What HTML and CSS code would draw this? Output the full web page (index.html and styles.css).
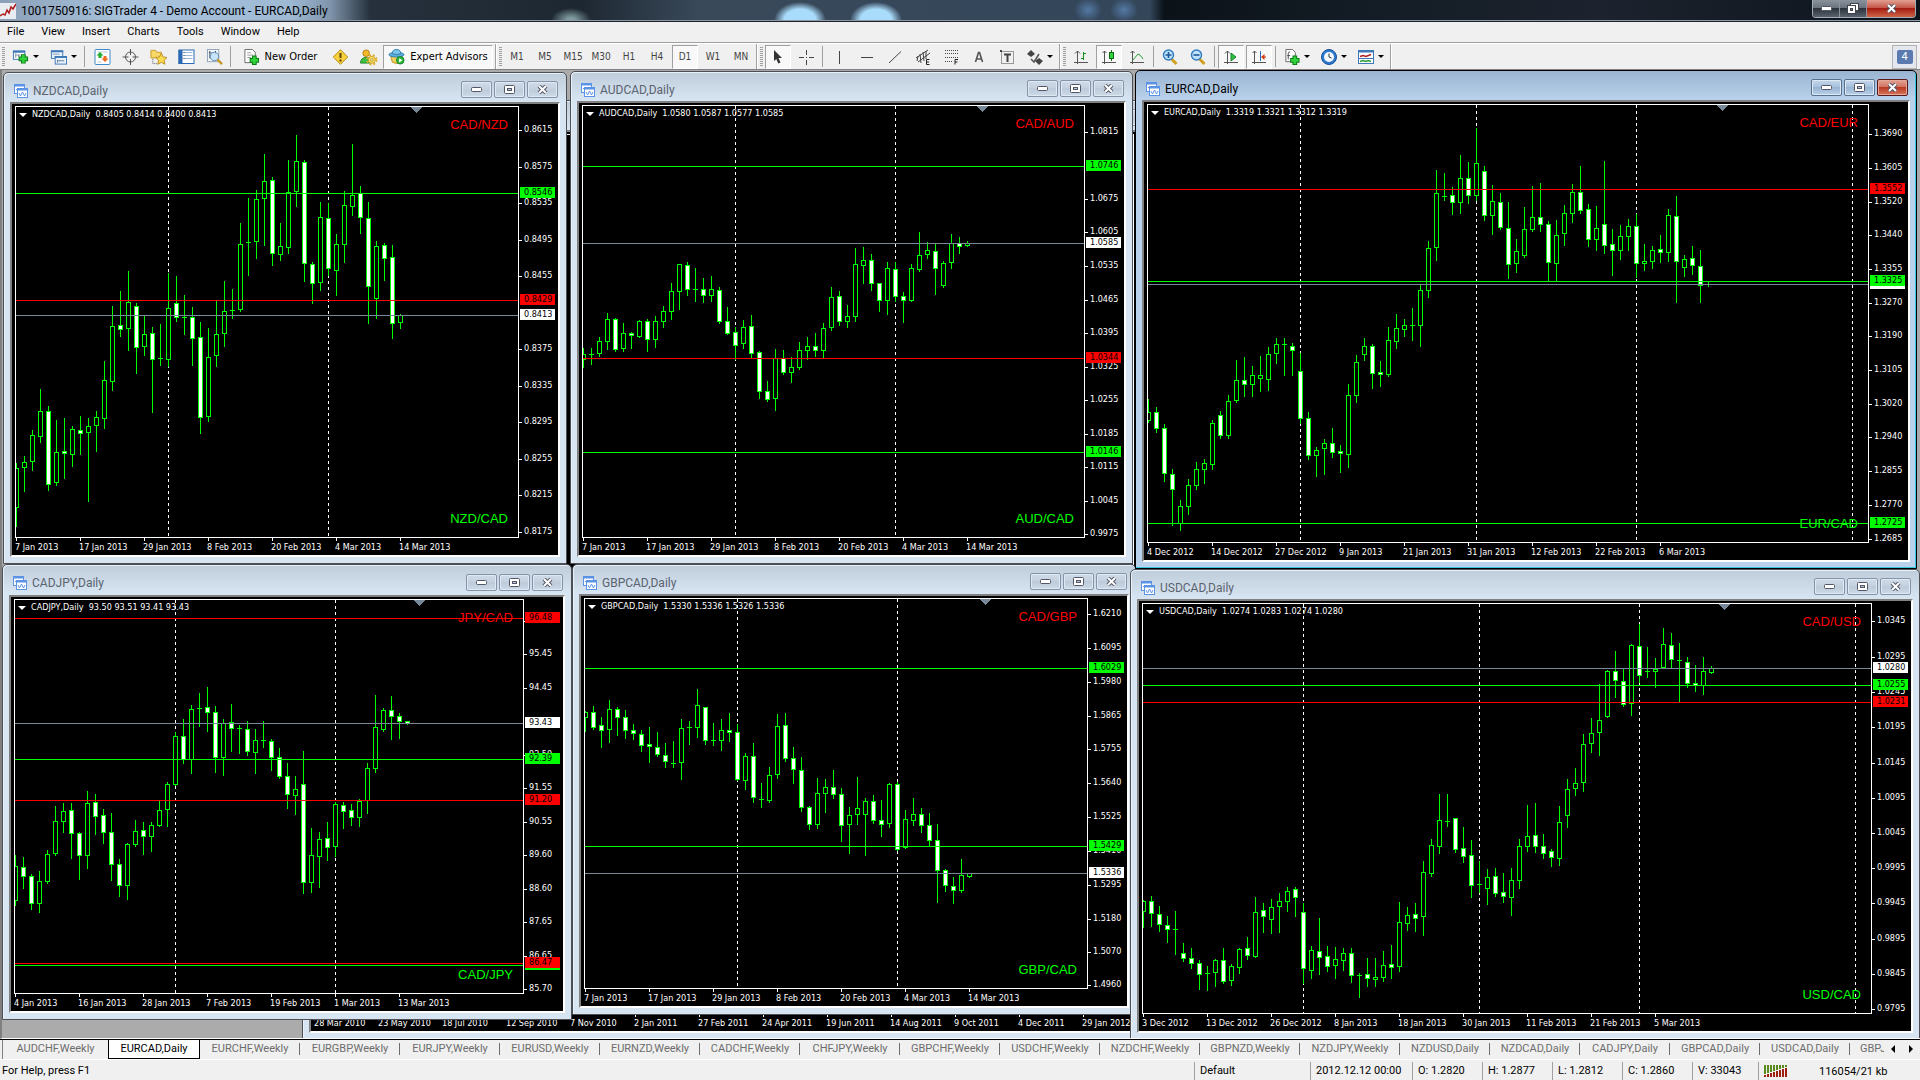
FILE: index.html
```html
<!DOCTYPE html>
<html lang="en">
<head>
<meta charset="utf-8">
<title>1001750916: SIGTrader 4 - Demo Account - EURCAD,Daily</title>
<link rel="stylesheet" href="styles.css">
</head>
<body>
<svg class="symbols" aria-hidden="true">
  <symbol id="i-chart-window" viewBox="0 0 14 14">
    <rect x=".5" y=".5" width="10" height="9" fill="#fff" stroke="#5b93e6"/><path d="M0 1.5h11" stroke="#5b93e6" stroke-width="2"/>
    <path d="M2 6l2-2 1 2 2-2" fill="none" stroke="#5b93e6"/>
    <rect x="3.500" y="4.500" width="10" height="9" fill="#fff" stroke="#5b93e6"/><path d="M3 5.500h11" stroke="#5b93e6" stroke-width="2"/>
    <path d="M5 9l1.500 3 2-4 2 4 1.500-3" fill="none" stroke="#5b93e6"/>
  </symbol>
  <symbol id="i-min" viewBox="0 0 11 5"><rect x=".5" y=".5" width="10" height="4" rx="1" fill="#fff" stroke="#535666"/></symbol>
  <symbol id="i-max" viewBox="0 0 11 9"><rect x=".5" y=".5" width="10" height="8" rx="1" fill="#fff" stroke="#535666"/><rect x="3.500" y="3.500" width="4" height="2" fill="#b8c8d8" stroke="#535666"/></symbol>
  <symbol id="i-restore" viewBox="0 0 12 11"><rect x="3.500" y=".5" width="8" height="7" fill="#fff" stroke="#40444e"/><rect x=".5" y="2.500" width="8" height="8" fill="#fff" stroke="#40444e"/><rect x="3.500" y="5.500" width="2" height="2" fill="#888" stroke="#40444e"/></symbol>
  <symbol id="i-close" viewBox="0 0 11 9"><path d="M2 1l7 7M9 1L2 8" stroke="#535666" stroke-width="4"/><path d="M2 1l7 7M9 1L2 8" stroke="#fff" stroke-width="2"/></symbol>
</svg>

<header class="titlebar">
  <svg class="app-icon" viewBox="0 0 16 16"><rect width="16" height="16" fill="#e9edf2"/><path d="M0 13l3-2 2 1 2-5 2 3 2-6 2 2 3-5" fill="none" stroke="#b01c1c" stroke-width="1.500"/></svg>
  <h1 class="title">1001750916: SIGTrader 4 - Demo Account - EURCAD,Daily</h1>
  <div class="app-buttons">
    <button class="app-btn" aria-label="Minimize"><svg width="11" height="5"><use href="#i-min"/></svg></button>
    <button class="app-btn" aria-label="Restore"><svg width="12" height="11"><use href="#i-restore"/></svg></button>
    <button class="app-btn app-close" aria-label="Close"><svg width="11" height="9"><use href="#i-close"/></svg></button>
  </div>
</header>

<nav class="menubar" aria-label="Main menu">
  <button>File</button><button>View</button><button>Insert</button><button>Charts</button><button>Tools</button><button>Window</button><button>Help</button>
</nav>

<div class="toolbars">
  <div class="toolbar standard" role="toolbar" aria-label="Standard">
    <button class="tool drop" aria-label="New chart"><svg viewBox="0 0 18 16"><rect x="1.500" y="1.500" width="12" height="9" fill="#fff" stroke="#3f78b8"/><path d="M1 2.500h13" stroke="#3f78b8" stroke-width="2"/><path d="M4 4v5M3 6h6M7 5v3" stroke="#89a" fill="none"/><path d="M12 5v10M7 10h10" stroke="#0a7a14" stroke-width="5"/><path d="M12 6v8M8 10h8" stroke="#2fd23c" stroke-width="3"/></svg><i class="caret"></i></button>
    <button class="tool drop" aria-label="Profiles"><svg viewBox="0 0 18 16"><rect x="1.500" y="1.500" width="12" height="8" fill="#e8f2fc" stroke="#3f78b8"/><path d="M1 2h13" stroke="#3f78b8" stroke-width="2"/><path d="M3 5h7" stroke="#89a"/><rect x="5.500" y="7.500" width="12" height="8" fill="#e8f2fc" stroke="#3f78b8"/><path d="M5 8h13" stroke="#3f78b8" stroke-width="2"/><path d="M8 12h7M8 11v3" stroke="#678"/></svg><i class="caret"></i></button>
    <span class="sep"></span>
    <button class="tool" aria-label="Market Watch"><svg viewBox="0 0 16 16"><rect x=".5" y=".5" width="15" height="15" rx="1" fill="#fff" stroke="#3f8ac8"/><path d="M3 3h10M3 13h4" stroke="#b8c8d8"/><path d="M2 6.500L5.500 3 9 6.500H7V9H4V6.500z" fill="#1fae2c"/><path d="M7 9.500h2V7h3v2.500h2L10.500 13z" fill="#ef6a1c"/></svg></button>
    <button class="tool" aria-label="Data Window"><svg viewBox="0 0 16 16"><circle cx="8" cy="8" r="5" fill="none" stroke="#555"/><path d="M8 0v6M8 10v6M0 8h6M10 8h6" stroke="#555"/></svg></button>
    <button class="tool" aria-label="Navigator"><svg viewBox="0 0 18 16"><path d="M1 1h5l1 2h5v6H1z" fill="#f8d868" stroke="#c69a28"/><path d="M3 10v5h4" stroke="#555" stroke-dasharray="1 1" fill="none"/><path d="M12 4l2 4 4 .5-3 3 .8 4.200L12 13.600 8.200 15.700 9 11.500l-3-3 4-.5z" fill="#fbdc50" stroke="#b98a20"/></svg></button>
    <button class="tool" aria-label="Terminal"><svg viewBox="0 0 16 16"><rect x=".5" y="1" width="15" height="13.500" fill="#fff" stroke="#2a6ab4"/><rect x="0" y="1" width="4" height="14" fill="#2a6ab4"/><path d="M6 3.500h8M6 6.500h8M6 9.500h8" stroke="#9bb8dc"/><path d="M5.500 3v8" stroke="#222" stroke-dasharray="1 2"/></svg></button>
    <button class="tool" aria-label="Strategy Tester"><svg viewBox="0 0 18 17"><rect x="1.500" y=".5" width="12" height="13" fill="#f4f7fa" stroke="#8fa3b8"/><path d="M4 2v8M3 4h3M10 2v4" stroke="#456"/><circle cx="9" cy="8" r="4.500" fill="#bfe0f8" fill-opacity=".85" stroke="#5a86b0"/><path d="M12 11l5 5" stroke="#c79828" stroke-width="2.500"/></svg></button>
    <span class="sep"></span>
    <button class="tool wide"><svg viewBox="0 0 17 17"><path d="M1.500.5h8l3 3v11h-11z" fill="#fff" stroke="#666"/><path d="M4 4h4M4 6.500h6M4 9h4" stroke="#999"/><path d="M11.500 7v10M6.500 12h10" stroke="#0a7a14" stroke-width="5"/><path d="M11.500 8v8M7.500 12h8" stroke="#2fd23c" stroke-width="3"/></svg>New Order</button>
    <button class="tool" aria-label="Alerts"><svg viewBox="0 0 16 16"><path d="M8 .7L15.300 8 8 15.300.7 8z" fill="#f8cf3c" stroke="#b8901c"/><path d="M8 4v5M8 10.500v2" stroke="#5a4408" stroke-width="2"/></svg></button>
    <button class="tool" aria-label="Options"><svg viewBox="0 0 18 17"><circle cx="6.500" cy="4.500" r="3.500" fill="#f4b928" stroke="#b47c14"/><path d="M.5 15c0-4 2-6 6-6s5 2 5 6z" fill="#3fbf48" stroke="#23882c"/><circle cx="12.500" cy="11.500" r="5" fill="none" stroke="#d9ae28" stroke-width="2" stroke-dasharray="2 2"/><circle cx="12.500" cy="11.500" r="3.700" fill="#f9de5c" stroke="#c9a12c"/><circle cx="12.500" cy="11.500" r="1.300" fill="#fff" stroke="#b9921c"/></svg></button>
    <button class="tool ea pressed" aria-pressed="true"><svg viewBox="0 0 17 17"><path d="M2 6h13l-2 8q-4.500 3-9 0z" fill="#f3cf5a" stroke="#b8902c"/><ellipse cx="8.500" cy="6" rx="8" ry="2.500" fill="#5fb0dc" stroke="#2c7cb0"/><path d="M4 5q0-4.500 4.500-4.500T13 5q-4.500 2-9 0z" fill="#7cc4ea" stroke="#2c7cb0"/><circle cx="12.500" cy="12" r="4" fill="#2db83c" stroke="#14802a"/><path d="M11.200 9.700v4.600l3.600-2.300z" fill="#fff"/></svg>Expert Advisors</button>
  </div>
  <div class="toolbar periods" role="toolbar" aria-label="Periodicity">
    <button class="tool">M1</button><button class="tool">M5</button><button class="tool">M15</button><button class="tool">M30</button><button class="tool">H1</button><button class="tool">H4</button><button class="tool pressed" aria-pressed="true">D1</button><button class="tool">W1</button><button class="tool">MN</button>
  </div>
  <div class="toolbar" role="toolbar" aria-label="Line Studies">
    <button class="tool pressed" aria-label="Cursor"><svg viewBox="0 0 16 16"><path d="M4 1l8 8H8.500l2 4.500-2.200 1L6.300 10 4 12z" fill="#333"/></svg></button>
    <button class="tool" aria-label="Crosshair"><svg viewBox="0 0 16 16"><path d="M8.500 1v5M8.500 11v5M1 8.500h5M11 8.500h5M8 8.500h1" stroke="#444" fill="none"/></svg></button>
    <span class="sep"></span>
    <button class="tool" aria-label="Vertical line"><svg viewBox="0 0 16 16"><path d="M8.500 2v13" stroke="#444"/></svg></button>
    <button class="tool" aria-label="Horizontal line"><svg viewBox="0 0 16 16"><path d="M2 8.500h12" stroke="#444"/></svg></button>
    <button class="tool" aria-label="Trendline"><svg viewBox="0 0 16 16"><path d="M2 14L14 2.500" stroke="#444"/></svg></button>
    <button class="tool" aria-label="Equidistant channel"><svg viewBox="0 0 16 16"><path d="M1 9L13 1M3 13L15 4M5 5l1 9M8 3l1 9M11 2v8M3 7l-1 5" stroke="#444"/><path d="M14.500 10.500h-3v5h3M11.500 13h2.500" stroke="#222" fill="none"/></svg></button>
    <button class="tool" aria-label="Fibonacci retracement"><svg viewBox="0 0 16 16"><path d="M2 1.500h13M2 4.500h13M2 8.500h13M2 12.500h8" stroke="#444" stroke-dasharray="1 1"/><path d="M15 10.500h-3v5M12 13h2.500" stroke="#222" fill="none"/></svg></button>
    <button class="tool" aria-label="Text"><svg viewBox="0 0 16 16"><path d="M4.500 13L7.500 3.500h1l3 9.500M5.500 10h5" stroke="#555" stroke-width="1.600" fill="none"/></svg></button>
    <button class="tool" aria-label="Text label"><svg viewBox="0 0 16 16"><rect x="2.500" y="2.500" width="12" height="12" fill="none" stroke="#444" stroke-dasharray="1 1"/><path d="M5 5.500h7M8.500 5v8" stroke="#444" stroke-width="2"/><rect x="1" y="1" width="2" height="2" fill="#444"/></svg></button>
    <button class="tool drop" aria-label="Arrows"><svg viewBox="0 0 16 16"><path d="M0 5l4-4 4 4-4 3z" fill="#444"/><path d="M8 12l4-3 4 3-4 4z" fill="#444"/><path d="M4 10l3 3 5-8" fill="none" stroke="#555" stroke-width="1.500"/></svg><i class="caret"></i></button>
  </div>
  <div class="toolbar" role="toolbar" aria-label="Charts">
    <button class="tool" aria-label="Bar chart"><svg viewBox="0 0 16 16"><path d="M4.500 2v13M1 13.500h14M2 4.500L4.500 2 7 4.500" stroke="#555" fill="none"/><path d="M10.500 3v8M8 9.500h2.500M10.500 4.500H13" stroke="#138a1c" fill="none"/></svg></button>
    <button class="tool pressed" aria-label="Candlesticks" aria-pressed="true"><svg viewBox="0 0 16 16"><path d="M3.500 2v13M1 13.500h14M1.500 4L3.500 2l2 2" stroke="#555" fill="none"/><path d="M10.500 1v11" stroke="#0c6a14"/><rect x="8.500" y="3.500" width="4" height="6" fill="#2fd23c" stroke="#0c6a14"/></svg></button>
    <button class="tool" aria-label="Line chart"><svg viewBox="0 0 16 16"><path d="M3.500 2v13M1 13.500h14M1.500 4L3.500 2l2 2" stroke="#555" fill="none"/><path d="M4 11l5-6q2 0 5 5" stroke="#2aa036" fill="none"/></svg></button>
    <span class="sep"></span>
    <button class="tool" aria-label="Zoom in"><svg viewBox="0 0 16 16"><path d="M9.500 10l5 5" stroke="#d0a020" stroke-width="3"/><circle cx="6.500" cy="6" r="5" fill="#bfe2fa" stroke="#2f7ac0" stroke-width="1.400"/><path d="M6.500 3v6M3.500 6h6" stroke="#1f5a98" stroke-width="1.600"/></svg></button>
    <button class="tool" aria-label="Zoom out"><svg viewBox="0 0 16 16"><path d="M9.500 10l5 5" stroke="#d0a020" stroke-width="3"/><circle cx="6.500" cy="6" r="5" fill="#bfe2fa" stroke="#2f7ac0" stroke-width="1.400"/><path d="M3.500 6h6" stroke="#1f5a98" stroke-width="1.600"/></svg></button>
    <span class="sep"></span>
    <button class="tool pressed" aria-label="Auto scroll" aria-pressed="true"><svg viewBox="0 0 16 16"><path d="M4.500 2v13M1 13.500h14M2 4.500L4.500 2 7 4.500" stroke="#555" fill="none"/><path d="M8 4l5 4-5 4z" fill="#2fc23c" stroke="#14802a"/></svg></button>
    <button class="tool pressed" aria-label="Chart shift" aria-pressed="true"><svg viewBox="0 0 16 16"><path d="M3.500 2v13M1 13.500h14M1.500 4L3.500 2l2 2" stroke="#555" fill="none"/><path d="M9.500 2v10" stroke="#2a6ab4"/><path d="M15 8h-4" stroke="#c22c10"/><path d="M10 8l3.500-3v6z" fill="#d83c14"/></svg></button>
    <span class="sep"></span>
    <button class="tool drop" aria-label="Indicators"><svg viewBox="0 0 16 17"><path d="M1.500.5h7l3 3v10h-10z" fill="#fff" stroke="#666"/><path d="M4 11V5q0-2 2-2M3 7h3" stroke="#444" fill="none"/><path d="M11 7v10M6 12h10" stroke="#0a7a14" stroke-width="5"/><path d="M11 8v8M7 12h8" stroke="#2fd23c" stroke-width="3"/></svg><i class="caret"></i></button>
    <button class="tool drop" aria-label="Periods"><svg viewBox="0 0 16 16"><circle cx="8" cy="8" r="7.500" fill="#2a7ad0" stroke="#1a4f98"/><circle cx="8" cy="8" r="5" fill="#f4f9ff"/><path d="M8 4.500V8l2.500 1" stroke="#333" fill="none"/></svg><i class="caret"></i></button>
    <button class="tool drop" aria-label="Templates"><svg viewBox="0 0 16 16"><rect x=".5" y="1.500" width="15" height="13" fill="#fff" stroke="#3f78b8"/><path d="M0 2.500h16" stroke="#3f78b8" stroke-width="2"/><path d="M2 7.500l3-1 3 1 5-2" stroke="#b02020" fill="none" stroke-width="1.400"/><path d="M1 9.500h14" stroke="#3f78b8"/><path d="M2 12.500l3-1 3 1 2-1 3 1" stroke="#2a9a36" fill="none" stroke-width="1.400"/></svg><i class="caret"></i></button>
  </div>
  <button class="messages" aria-label="4 messages"><span>4</span></button>
</div>

<main class="desktop" id="desktop"></main>

<nav class="tabs" aria-label="Open charts">
  <div class="tab-list">
    <button class="first">AUDCHF,Weekly</button><button class="daily active" aria-current="true">EURCAD,Daily</button><button>EURCHF,Weekly</button><button>EURGBP,Weekly</button><button>EURJPY,Weekly</button><button>EURUSD,Weekly</button><button>EURNZD,Weekly</button><button>CADCHF,Weekly</button><button>CHFJPY,Weekly</button><button>GBPCHF,Weekly</button><button>USDCHF,Weekly</button><button>NZDCHF,Weekly</button><button>GBPNZD,Weekly</button><button>NZDJPY,Weekly</button><button class="daily">NZDUSD,Daily</button><button class="daily">NZDCAD,Daily</button><button class="daily">CADJPY,Daily</button><button class="daily">GBPCAD,Daily</button><button class="daily">USDCAD,Daily</button><button class="cut">GBPJPY,Daily</button>
  </div>
  <button class="scroll left" aria-label="Scroll left"></button>
  <button class="scroll right" aria-label="Scroll right"></button>
</nav>

<footer class="status">
  <span>For Help, press F1</span>
  <span>Default</span>
  <span>2012.12.12 00:00</span>
  <span>O: 1.2820</span>
  <span>H: 1.2877</span>
  <span>L: 1.2812</span>
  <span>C: 1.2860</span>
  <span>V: 33043</span>
  <span class="traffic"><svg width="23" height="12" viewBox="0 0 23 12" shape-rendering="crispEdges"><g fill="#5a8a1c"><path d="M0 0h2v9H0zM3 0h2v8H3zM6 0h2v7H6zM9 0h2v6H9zM12 0h2v5h-2zM15 0h2v4h-2zM18 0h2v3h-2zM21 0h2v2h-2z"/></g><g fill="#a02010"><path d="M0 10h2v2H0zM3 9h2v3H3zM6 8h2v4H6zM9 7h2v5H9zM12 6h2v6h-2zM15 5h2v7h-2zM18 4h2v8h-2zM21 3h2v9h-2z"/></g></svg>116054/21 kb</span>
</footer>
<script src="charts.js"></script>
</body>
</html>
```
FILE: styles.css
```css
* { box-sizing: border-box; }

body {
  margin: 0;
  height: 100vh;
  display: flex;
  flex-direction: column;
  overflow: hidden;
  background: #f0f0f0;
  color: #000;
  font: 11px/14px Roboto, "Liberation Sans", sans-serif;
}

button {
  margin: 0;
  padding: 0;
  border: 0;
  background: none;
  color: inherit;
  font: inherit;
}

.symbols { display: none; }

/* Application title bar */
.titlebar {
  flex: none;
  display: flex;
  align-items: center;
  height: 22px;
  padding-right: 4px;
  border-bottom: 1px solid #1c222c;
  box-shadow: inset 0 -1px #8e98a6;
  background:
    radial-gradient(ellipse 26px 18px at 800px 20px, #a9dcfb 60%, transparent),
    radial-gradient(ellipse 26px 18px at 876px 20px, #a9dcfb 60%, transparent),
    radial-gradient(ellipse 20px 12px at 571px 20px, #7d9a9c 20%, transparent),
    radial-gradient(ellipse 14px 12px at 1088px 10px, #5479a4, transparent),
    radial-gradient(ellipse 14px 12px at 1124px 10px, #5479a4, transparent),
    linear-gradient(90deg, #8ba0b8, #a9c4de 130px, #9db9d4 290px, #7f95ab 330px, #26313d 370px, #1d2731 580px, #39495a 700px, #33465a 1150px, #0b1218 1164px, #131b24 1350px, #1c232e 1600px, #0d131b);
}
.app-icon { width: 16px; height: 16px; }
.title { flex: 1; margin: 0 0 0 5px; font-size: 12px; font-weight: 400; line-height: 16px; }
.app-buttons {
  align-self: flex-start;
  display: flex;
  height: 18px;
  border: 1px solid #a4acb6;
  border-top: 0;
  border-radius: 0 0 4px 4px;
  overflow: hidden;
}
.app-btn {
  display: flex;
  align-items: center;
  justify-content: center;
  width: 27px;
  border-right: 1px solid #8a929c;
  background: linear-gradient(#8a929c, #6b737e 45%, #2c333d 50%, #59626d);
}
.app-close { width: 48px; border-right: 0; background: linear-gradient(#e0a090, #c5574a 45%, #a51d10 50%, #cf6448); }

/* Menu */
.menubar {
  flex: none;
  display: flex;
  height: 21px;
  padding-left: 7px;
  gap: 17px;
  border-bottom: 1px solid #a0a0a0;
}

/* Toolbars */
.toolbars {
  flex: none;
  display: flex;
  align-items: stretch;
  height: 27px;
  border-top: 1px solid #fff;
  border-bottom: 1px solid #808080;
}
.toolbar {
  display: flex;
  align-items: center;
  gap: 2px;
  padding: 0 2px;
  border-right: 1px solid #a0a0a0;
  box-shadow: 1px 0 #fff;
}
.toolbar + .toolbar { padding-left: 3px; }
.toolbar::before {
  content: "";
  width: 3px;
  height: 20px;
  background: repeating-linear-gradient(#a0a0a0 0 1px, #f0f0f0 1px 2px);
}
.sep { width: 1px; height: 21px; margin: 0 1px; background: #a0a0a0; }
.standard .sep { margin: 0 2px 0 1px; }
.tool {
  display: flex;
  align-items: center;
  justify-content: center;
  gap: 5px;
  width: 26px;
  height: 24px;
}
.tool svg { flex: none; width: 16px; height: 16px; overflow: visible; }
.drop { width: 35px; gap: 4px; }
.standard .drop { width: 36px; }
.standard svg { width: 17px; }
.caret { width: 6px; border: 3px solid transparent; border-top-color: #000; border-bottom: 0; }
.wide { width: 90px; }
.ea { width: 110px; }
.wide, .ea { font: 11px/16px "DejaVu Sans Condensed", "DejaVu Sans", sans-serif; white-space: nowrap; }
.pressed {
  border: 1px solid;
  border-color: #a0a0a0 #fff #fff #a0a0a0;
  background: #f8f8f8;
}
.periods { font-family: "DejaVu Sans Condensed", "DejaVu Sans", sans-serif; font-size: 10px; color: #444; }
.messages {
  align-self: center;
  width: 25px;
  height: 24px;
  margin: 0 3px 0 auto;
  border: 1px solid #b4b4b4;
  background: #e4e8ee;
}
.messages span {
  display: block;
  width: 16px;
  height: 14px;
  margin: 0 auto;
  border-radius: 2px;
  background: #5b7bb0;
  color: #fff;
  font-size: 11px;
}

/* Desktop holding the chart windows */
.desktop {
  position: relative;
  flex: 1;
  min-height: 0;
  overflow: hidden;
  border-left: 2px solid #808080;
  border-bottom: 1px solid #fff;
  background: #ababab;
}
.window {
  position: absolute;
  display: flex;
  flex-direction: column;
  padding: 0 6px 6px;
  border: 1px solid #4c4f55;
  border-radius: 5px 5px 0 0;
  background: linear-gradient(#bfcddb, #d7e4f2 28px);
  box-shadow: inset 1px 1px #e8f0f8;
}
.window.active {
  background: linear-gradient(#99b4d2, #b9d1ea 28px);
  border-color: #000;
  box-shadow: inset -1px -1px #35c8dc;
}
.w-back   { left: 300px; top: 30px; width: 880px; height: 940px; }
.w-nzdcad { left: 1px; top: 2px; width: 564px; height: 492px; }
.w-audcad { left: 568px; top: 1px; width: 563px; height: 493px; }
.w-eurcad { left: 1133px; top: 0; width: 782px; height: 499px; z-index: 1; }
.w-cadjpy { left: 0; top: 494px; width: 570px; height: 456px; }
.w-gbpcad { left: 570px; top: 494px; width: 564px; height: 451px; }
.w-usdcad { left: 1128px; top: 499px; width: 790px; height: 471px; }
.w-cadjpy .caption { height: 30px; }

.caption {
  flex: none;
  display: flex;
  align-items: center;
  gap: 5px;
  height: 29px;
  padding: 6px 2px 0 4px;
  color: #5a636e;
}
.active .caption { color: #000; }
.caption h2 { flex: 1; margin: 0; font-size: 12px; font-weight: 400; line-height: 16px; }
.caption-buttons { display: flex; gap: 2px; margin-top: -2px; }
.caption-buttons button {
  display: flex;
  align-items: center;
  justify-content: center;
  width: 31px;
  height: 17px;
  border: 1px solid #8592a8;
  border-radius: 2px;
  background: linear-gradient(#cfdbe8, #c4d0de 50%, #bccad9 50%, #cddae8);
  box-shadow: inset 0 0 0 1px #dfe9f3;
}
.active .caption-buttons button { border-color: #56708f; background: linear-gradient(#c5d8ec, #a4bfdb 50%, #98b4d2 50%, #b9d1ea); }
.active .caption-buttons button:last-child { border-color: #5a1a1a; background: linear-gradient(#e2a294, #d0705e 50%, #bb3a22 50%, #d5765c); box-shadow: inset 0 0 0 1px #e4a898; }

.chart {
  flex: 1;
  min-height: 0;
  display: grid;
  grid-template: minmax(0, 1fr) 17px / minmax(0, 1fr) 39px;
  padding: 2px 0 0 3px;
  border: 2px solid;
  border-color: #808080 #fff #fff #808080;
  background: #000;
  color: #fff;
  font: 9px/11px "DejaVu Sans Condensed", "DejaVu Sans", sans-serif;
}
.plot { position: relative; border: 1px solid #fff; overflow: hidden; }
.plot svg { position: absolute; inset: 0; width: 100%; height: 100%; }
.quote { position: relative; display: flex; align-items: center; gap: 5px; padding: 2px 0 0 3px; white-space: pre; }
.quote::before { content: ""; border: 4px solid transparent; border-top-color: #fff; border-bottom: 0; }
.pair {
  position: absolute;
  right: 10px;
  margin-top: -9px;
  font: 13px/16px "Liberation Sans", Arial, sans-serif;
}
.pair.sell { color: #f00; }
.pair.buy { color: #0f0; }
.prices { position: relative; }
.prices span { position: absolute; left: 1px; width: 35px; height: 11px; margin-top: -6px; padding-left: 4px; white-space: nowrap; }
.prices .tick::before { content: ""; position: absolute; left: -1px; top: 6px; width: 3px; height: 1px; background: #fff; }
.prices .tag { color: #000; }
.green { background: #0f0; }
.red { background: #f00; }
.last { background: #fff; }
.times { grid-column: 1 / -1; display: grid; grid-auto-flow: column; grid-auto-columns: 64px; overflow: hidden; }
.times span { position: relative; padding-top: 4px; white-space: nowrap; }
.times span::before { content: ""; position: absolute; left: 1px; top: 0; width: 1px; height: 3px; background: #fff; }

/* Chart tabs */
.tabs {
  flex: none;
  display: flex;
  align-items: flex-start;
  height: 21px;
  border-top: 1px solid #000;
  border-bottom: 1px solid #fff;
  color: #6d6d6d;
}
.tab-list { flex: 1; min-width: 0; display: flex; overflow: hidden; margin-left: 2px; border-left: 1px solid #808080; }
.tab-list button { flex: none; width: 100px; height: 19px; padding: 0 0 1px; white-space: nowrap; position: relative; }
.tab-list button:not(.first, .active, .cut)::after { content: ""; position: absolute; right: 0; top: 3px; width: 1px; height: 12px; background: #6d6d6d; }
.tab-list .first { width: 105px; }
.tab-list .daily { width: 90px; }
.tab-list .active { width: 92px; background: #fff; color: #000; border: solid #000; border-width: 0 1px 1px; }
.tab-list .cut { width: 36px; padding-left: 10px; overflow: hidden; text-align: left; }
.scroll { width: 18px; height: 18px; display: flex; align-items: center; justify-content: center; }
.scroll::before { content: ""; border: 4px solid transparent; }
.scroll.left::before { border-right-color: #000; border-left: 0; }
.scroll.right::before { border-left-color: #000; border-right: 0; }

/* Status bar */
.status {
  flex: none;
  display: grid;
  grid-template-columns: 1fr 116px 102px 70px 70px 70px 70px 66px 162px;
  height: 20px;
  padding-top: 2px;
  line-height: 17px;
}
.status span { padding-left: 5px; border-left: 1px solid #a0a0a0; white-space: nowrap; }
.status span:first-child { padding-left: 2px; border: 0; }
.status .traffic { display: flex; align-items: center; gap: 32px; }
```
FILE: charts.js
```js
// Bar heights are kept in thirds of a pixel: [high, body top, body bottom, low, falling].
// A bar whose body top equals its bottom opened and closed at one price.
const UNIT = 3;
const STEP = 8;

const charts = [
  {
    id: 'back', title: '', quote: '', top: 0, marker: 0, breaks: [], bars: [], prices: [], lines: [], pairs: [],
    times: ['28 Mar 2010', '23 May 2010', '18 Jul 2010', '12 Sep 2010', '7 Nov 2010', '2 Jan 2011', '27 Feb 2011', '24 Apr 2011', '19 Jun 2011', '14 Aug 2011', '9 Oct 2011', '4 Dec 2011', '29 Jan 2012'],
  },
  {
    id: 'nzdcad', title: 'NZDCAD,Daily', quote: '0.8405 0.8414 0.8400 0.8413', top: 6, marker: 401, breaks: [19, 39],
    pairs: [['CAD/NZD', 76], ['NZD/CAD', 1258]],
    times: ['7 Jan 2013', '17 Jan 2013', '29 Jan 2013', '8 Feb 2013', '20 Feb 2013', '4 Mar 2013', '14 Mar 2013'],
    prices: [[90, '0.8615'], [201, '0.8575'], [310, '0.8535'], [420, '0.8495'], [528, '0.8455'], [747, '0.8375'], [858, '0.8335'], [966, '0.8295'], [1077, '0.8255'], [1185, '0.8215'], [1296, '0.8175']],
    lines: [[646, 'last', '0.8413'], [280, 'green', '0.8546'], [601, 'red', '0.8429']],
    bars: [[1090,1104,1222,1280,0],[1068,1087,1103,1175,0],[990,1006,1085,1112,0],[867,934,1010,1028,0],[918,934,1154,1172,1],[960,1057,1148,1155,0],[954,1054,1060,1134,1],[978,988,1063,1098,0],[948,991,1000,1064,1],[954,979,997,1205,0],[934,952,976,1055,0],[783,841,956,986,0],[618,679,845,872,0],[573,676,689,708,1],[513,606,686,752,0],[610,619,743,819,1],[646,703,740,767,0],[682,700,779,936,1],[672,776,776,797,0],[519,625,779,800,0],[528,610,653,665,1],[585,652,652,702,0],[621,652,716,797,1],[666,712,953,1001,1],[685,772,950,965,0],[603,703,767,800,0],[543,634,701,740,0],[567,631,631,654,0],[369,433,629,633,0],[294,428,428,525,0],[270,298,425,476,0],[162,244,296,435,0],[231,241,461,497,1],[369,439,464,482,0],[180,277,443,461,0],[105,184,275,320,0],[180,187,491,545,1],[486,493,551,611,1],[306,352,548,570,0],[309,355,506,527,1],[402,433,512,585,0],[273,316,434,486,0],[132,286,320,345,0],[258,281,353,399,1],[306,355,560,671,1],[423,439,596,654,0],[430,436,476,540,1],[435,472,671,714,1],[642,647,668,684,0]],
  },
  {
    id: 'audcad', title: 'AUDCAD,Daily', quote: '1.0580 1.0587 1.0577 1.0585', top: 5, marker: 400, breaks: [19, 39],
    pairs: [['CAD/AUD', 73], ['AUD/CAD', 1258]],
    times: ['7 Jan 2013', '17 Jan 2013', '29 Jan 2013', '8 Feb 2013', '20 Feb 2013', '4 Mar 2013', '14 Mar 2013'],
    prices: [[98, '1.0815'], [299, '1.0675'], [398, '1.0605'], [500, '1.0535'], [600, '1.0465'], [699, '1.0395'], [801, '1.0325'], [900, '1.0255'], [1002, '1.0185'], [1101, '1.0115'], [1203, '1.0045'], [1302, '0.9975']],
    lines: [[430, 'last', '1.0585'], [199, 'green', '1.0746'], [775, 'red', '1.0344'], [1057, 'green', '1.0146']],
    bars: [[744,764,778,803,0],[744,762,762,792,0],[711,724,761,768,0],[639,658,725,747,0],[654,658,749,755,1],[669,700,746,755,0],[696,700,706,744,1],[660,664,710,713,0],[657,664,719,755,1],[648,664,719,741,0],[618,634,665,681,0],[549,574,635,657,0],[492,493,575,627,0],[486,496,569,587,1],[504,568,568,603,0],[534,568,587,608,1],[528,568,587,603,0],[561,571,665,669,1],[621,664,701,702,1],[682,697,737,779,1],[660,682,731,744,0],[645,679,761,774,1],[754,757,875,896,1],[843,874,899,903,1],[747,775,896,930,0],[750,775,818,822,1],[771,802,818,846,0],[726,751,803,807,0],[711,739,752,779,0],[699,739,752,768,1],[669,685,752,771,0],[561,592,683,690,0],[573,589,665,675,1],[615,649,665,681,0],[444,493,650,665,0],[441,481,497,549,0],[462,481,551,570,1],[549,550,602,633,1],[486,505,602,642,0],[486,508,590,603,1],[576,589,602,666,1],[492,505,602,603,0],[396,466,509,513,0],[426,451,464,476,0],[430,454,506,582,1],[483,490,557,563,0],[402,430,488,504,0],[411,431,440,459,1],[425,430,437,440,0]],
  },
  {
    id: 'eurcad', title: 'EURCAD,Daily', quote: '1.3319 1.3321 1.3312 1.3319', top: 14, marker: 575, active: true, breaks: [19, 41, 61, 88],
    pairs: [['CAD/EUR', 100], ['EUR/CAD', 1302]],
    times: ['4 Dec 2012', '14 Dec 2012', '27 Dec 2012', '9 Jan 2013', '21 Jan 2013', '31 Jan 2013', '12 Feb 2013', '22 Feb 2013', '6 Mar 2013'],
    prices: [[132, '1.3690'], [234, '1.3605'], [336, '1.3520'], [435, '1.3440'], [537, '1.3355'], [639, '1.3270'], [738, '1.3190'], [840, '1.3105'], [942, '1.3020'], [1041, '1.2940'], [1143, '1.2855'], [1245, '1.2770'], [1347, '1.2685']],
    lines: [[583, 'last', '1.3319'], [298, 'red', '1.3552'], [574, 'green', '1.3325'], [1300, 'green', '1.2725']],
    bars: [[927,967,990,998,0],[951,967,1016,1028,1],[1003,1015,1151,1175,1],[1137,1153,1198,1307,1],[1230,1249,1300,1320,0],[1167,1186,1249,1272,0],[1116,1138,1187,1197,0],[1107,1120,1138,1179,0],[990,1000,1124,1137,0],[963,976,1036,1044,1],[915,934,1037,1046,0],[810,871,932,937,0],[801,871,883,918,1],[828,856,884,918,0],[798,856,866,903,0],[771,794,868,900,0],[744,763,791,820,0],[744,764,764,855,0],[759,769,781,855,1],[790,844,986,1000,1],[966,985,1097,1107,1],[1072,1081,1097,1160,0],[1047,1060,1076,1152,0],[1014,1060,1087,1101,1],[1065,1084,1090,1146,1],[882,916,1094,1131,0],[795,817,917,936,0],[744,769,794,812,0],[762,769,850,894,1],[814,847,853,888,1],[711,751,853,858,0],[672,715,754,774,0],[687,706,718,739,0],[654,707,707,750,0],[582,601,707,768,0],[453,475,602,621,0],[240,310,473,510,0],[249,318,318,330,0],[291,316,338,372,1],[195,265,338,369,0],[216,265,317,341,1],[114,220,317,330,0],[228,244,377,390,1],[285,334,377,432,0],[309,337,413,417,1],[336,415,523,564,1],[447,484,521,546,0],[351,418,496,501,0],[288,382,419,423,0],[279,382,403,423,1],[393,403,517,573,1],[390,436,521,573,0],[345,370,431,465,0],[282,307,371,396,0],[228,307,362,369,1],[342,358,449,468,1],[348,415,449,480,0],[213,403,466,489,1],[417,463,482,555,1],[405,439,482,507,0],[387,409,439,480,0],[372,409,521,561,1],[462,514,521,540,0],[468,481,515,534,0],[435,478,487,517,1],[357,376,488,513,0],[318,379,515,636,1],[495,508,532,558,0],[468,505,527,552,1],[480,529,587,636,1],[578,584,584,590,0]],
  },
  {
    id: 'cadjpy', title: 'CADJPY,Daily', quote: '93.50 93.51 93.41 93.43', top: 34, marker: 405, breaks: [20, 40],
    pairs: [['JPY/CAD', 160], ['CAD/JPY', 1230]],
    times: ['4 Jan 2013', '16 Jan 2013', '28 Jan 2013', '7 Feb 2013', '19 Feb 2013', '1 Mar 2013', '13 Mar 2013'],
    prices: [[170, '96.45'], [268, '95.45'], [369, '94.45'], [571, '92.50'], [669, '91.55'], [771, '90.55'], [870, '89.60'], [972, '88.60'], [1071, '87.65'], [1173, '86.65'], [1272, '85.70']],
    lines: [[475, 'last', '93.43'], [583, 'green', '92.39'], [706, 'red', '91.20'], [160, 'red', '96.48'], [1201, 'green', '86.42'], [1195, 'red', '86.47']],
    bars: [[870,904,1006,1020,0],[876,907,935,969,1],[927,934,1016,1034,1],[918,949,1016,1043,0],[855,868,950,954,0],[723,769,866,870,0],[714,739,770,803,0],[714,736,806,879,1],[801,805,872,942,1],[678,715,872,909,0],[687,712,755,807,1],[732,751,803,834,1],[744,802,899,945,1],[882,898,962,993,1],[834,838,962,1002,0],[765,799,839,843,0],[771,796,815,867,1],[771,781,815,858,0],[708,736,782,783,0],[651,658,734,785,0],[503,514,659,660,0],[462,514,583,594,1],[420,433,583,624,0],[384,430,430,483,0],[366,427,443,498,1],[423,442,578,621,1],[462,475,578,630,0],[417,472,491,558,1],[480,490,490,564,0],[468,493,560,570,1],[492,526,563,624,0],[468,527,527,546,0],[522,529,578,615,1],[549,577,635,639,1],[594,634,689,729,1],[633,673,692,747,0],[558,658,953,984,1],[789,871,953,981,0],[801,823,875,966,0],[771,820,848,885,1],[711,718,845,873,0],[711,721,740,789,1],[717,736,758,780,1],[702,708,758,783,0],[594,610,706,744,0],[390,487,611,621,0],[430,436,494,498,0],[393,436,455,522,1],[444,454,470,519,1],[468,469,475,479,1]],
  },
  {
    id: 'gbpcad', title: 'GBPCAD,Daily', quote: '1.5330 1.5336 1.5326 1.5336', top: 33, marker: 401, breaks: [19, 39],
    pairs: [['CAD/GBP', 156], ['GBP/CAD', 1215]],
    times: ['7 Jan 2013', '17 Jan 2013', '29 Jan 2013', '8 Feb 2013', '20 Feb 2013', '4 Mar 2013', '14 Mar 2013'],
    prices: [[147, '1.6210'], [249, '1.6095'], [351, '1.5980'], [453, '1.5865'], [552, '1.5755'], [654, '1.5640'], [756, '1.5525'], [858, '1.5410'], [960, '1.5295'], [1062, '1.5180'], [1161, '1.5070'], [1260, '1.4960']],
    lines: [[925, 'last', '1.5336'], [310, 'green', '1.6029'], [844, 'green', '1.5429']],
    bars: [[438,442,458,498,0],[423,442,486,494,1],[456,481,497,546,1],[405,433,494,531,0],[426,433,458,510,1],[435,457,497,519,1],[477,496,506,522,1],[495,508,542,558,1],[486,538,545,591,1],[501,547,569,573,1],[534,571,590,608,1],[528,594,594,608,0],[462,490,593,642,0],[468,487,487,537,0],[372,421,488,516,0],[426,427,527,537,1],[474,526,526,540,0],[462,496,527,555,0],[444,496,502,528,1],[477,502,644,647,1],[564,574,647,672,0],[534,574,698,711,1],[654,702,702,726,0],[606,631,707,711,0],[447,484,629,639,0],[444,481,581,588,1],[546,580,614,654,1],[576,616,728,738,1],[723,727,779,792,1],[639,685,779,789,0],[642,667,686,741,0],[615,667,689,699,1],[669,688,782,828,1],[726,751,779,864,0],[636,730,749,777,0],[699,709,749,870,0],[690,709,767,774,1],[705,766,779,813,1],[654,658,776,786,0],[652,658,854,856,1],[735,763,848,849,0],[699,748,765,780,0],[729,748,782,801,1],[744,781,827,840,1],[777,826,917,1011,1],[912,916,962,978,1],[936,964,977,1014,1],[882,931,977,981,0],[924,926,933,936,0]],
  },
  {
    id: 'usdcad', title: 'USDCAD,Daily', quote: '1.0274 1.0283 1.0274 1.0280', top: 38, marker: 582, breaks: [20, 42, 62, 89],
    pairs: [['CAD/USD', 172], ['USD/CAD', 1290]],
    times: ['3 Dec 2012', '13 Dec 2012', '26 Dec 2012', '8 Jan 2013', '18 Jan 2013', '30 Jan 2013', '11 Feb 2013', '21 Feb 2013', '5 Mar 2013'],
    prices: [[170, '1.0345'], [276, '1.0295'], [382, '1.0245'], [488, '1.0195'], [594, '1.0145'], [699, '1.0095'], [804, '1.0045'], [909, '0.9995'], [1015, '0.9945'], [1122, '0.9895'], [1227, '0.9845'], [1332, '0.9795']],
    lines: [[310, 'last', '1.0280'], [361, 'green', '1.0255'], [412, 'red', '1.0231']],
    bars: [[1005,1010,1040,1086,0],[993,1009,1046,1083,1],[1023,1048,1079,1098,1],[1053,1081,1094,1131,1],[1038,1092,1092,1167,0],[1134,1165,1181,1188,1],[1149,1180,1196,1209,1],[1185,1195,1229,1272,1],[1204,1225,1225,1275,0],[1182,1186,1223,1263,0],[1149,1186,1249,1254,1],[1198,1204,1247,1260,0],[1149,1153,1208,1224,0],[1116,1150,1172,1182,1],[996,1042,1175,1176,0],[1014,1036,1055,1101,1],[1002,1027,1064,1104,0],[984,1010,1025,1101,0],[966,979,1010,1038,0],[966,973,998,1053,1],[1014,1042,1211,1254,1],[1143,1156,1217,1239,0],[1059,1159,1178,1227,1],[1143,1174,1205,1218,1],[1147,1183,1202,1239,0],[1149,1165,1187,1215,0],[1149,1165,1232,1251,1],[1224,1231,1231,1296,0],[1179,1228,1241,1263,1],[1179,1237,1244,1263,0],[1158,1201,1238,1248,0],[1140,1198,1208,1239,1],[1011,1072,1205,1218,0],[1026,1051,1074,1095,0],[1014,1048,1061,1098,1],[888,922,1055,1110,0],[822,841,926,933,0],[687,766,845,864,0],[687,768,768,783,0],[759,760,854,863,1],[786,850,875,891,1],[825,871,962,996,1],[888,957,957,981,0],[912,937,971,1017,0],[909,934,986,993,1],[924,982,995,1011,1],[909,946,998,1050,0],[822,844,947,969,0],[720,814,845,858,0],[714,811,845,863,1],[807,844,866,879,1],[852,859,878,903,1],[723,772,881,900,0],[642,673,752,786,0],[609,655,671,692,0],[507,538,653,678,0],[459,505,536,561,0],[357,466,503,570,0],[315,319,455,456,0],[258,319,347,396,1],[312,349,419,423,1],[237,241,416,450,0],[177,244,332,351,1],[246,320,320,336,0],[279,313,320,366,0],[189,238,308,309,0],[204,241,284,306,1],[234,286,286,411,0],[276,292,356,366,1],[300,355,361,378,1],[276,319,361,387,0],[303,311,323,324,0]],
  },
];

const LINE_COLOURS = { green: '#0f0', red: '#f00', last: '#778899' };

function plotMarkup(chart) {
  const y = (v) => Math.floor(v / UNIT) - chart.top - 1;
  const rect = (x, top, w, h, fill) => `<rect x="${x}" y="${top}" width="${w}" height="${h}" fill="${fill}"/>`;
  let out = '';
  chart.breaks.forEach((i) => {
    out += `<path d="M${i * STEP + 0.5} 0V2000" stroke="#fff" stroke-dasharray="3 3"/>`;
  });
  chart.bars.forEach(([high, top, bottom, low, falling], i) => {
    const x = i * STEP;
    const t = y(top);
    const h = y(bottom) - t + 1;
    out += rect(x, y(high), 1, y(low) - y(high) + 1, '#0f0');
    out += rect(x - 2, t, 5, h, '#0f0');
    if (h > 2) out += rect(x - 1, t + 1, 3, h - 2, falling ? '#fff' : '#000');
  });
  chart.lines.forEach(([v, kind]) => {
    out += `<path d="M0 ${y(v) + 0.5}H3000" stroke="${LINE_COLOURS[kind]}"/>`;
  });
  if (chart.marker) out += `<path d="M${chart.marker - 6} 0h11l-5.500 6z" fill="#778899"/>`;
  return `<svg shape-rendering="crispEdges" aria-hidden="true">${out}</svg>`;
}

function windowMarkup(chart) {
  const y = (v) => Math.floor(v / UNIT) - chart.top;
  const pairs = chart.pairs.map(([name, v], i) =>
    `<div class="pair ${i ? 'buy' : 'sell'}" style="top:${y(v)}px">${name}</div>`).join('');
  const ticks = chart.prices.map(([v, text]) =>
    `<span class="tick" style="top:${y(v)}px">${text}</span>`).join('');
  const tags = chart.lines.map(([v, kind, text]) =>
    `<span class="tag ${kind}" style="top:${y(v)}px">${text}</span>`).join('');
  const quote = chart.title ? `<div class="quote">${chart.title}  ${chart.quote}</div>` : '';
  return `
    <section class="window w-${chart.id}${chart.active ? ' active' : ''}">
      <header class="caption">
        <svg width="14" height="14"><use href="#i-chart-window"/></svg>
        <h2>${chart.title}</h2>
        <div class="caption-buttons">
          <button aria-label="Minimize"><svg width="11" height="5"><use href="#i-min"/></svg></button>
          <button aria-label="Maximize"><svg width="11" height="9"><use href="#i-max"/></svg></button>
          <button aria-label="Close"><svg width="11" height="9"><use href="#i-close"/></svg></button>
        </div>
      </header>
      <div class="chart">
        <div class="plot">${plotMarkup(chart)}${pairs}${quote}</div>
        <div class="prices">${ticks}${tags}</div>
        <div class="times">${chart.times.map((t) => `<span>${t}</span>`).join('')}</div>
      </div>
    </section>`;
}

document.getElementById('desktop').innerHTML = charts.map(windowMarkup).join('');
```
